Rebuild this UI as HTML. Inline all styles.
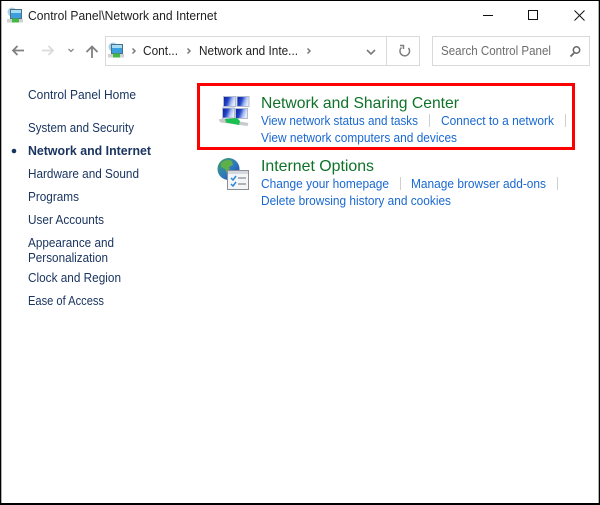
<!DOCTYPE html>
<html><head><meta charset="utf-8"><style>
html,body{margin:0;padding:0;background:#fff;width:600px;height:505px;overflow:hidden}
svg{display:block}
text{font-family:"Liberation Sans",sans-serif;font-size:12.5px;fill:#1a3a5e}
.t{fill:#222}
.n{fill:#1a3560}
.l{fill:#1a68d0}
.h{fill:#0f7228;font-size:16px}
</style></head><body>
<svg width="600" height="505" viewBox="0 0 600 505" xmlns="http://www.w3.org/2000/svg">
<defs>
<linearGradient id="mg" x1="0" y1="0" x2="1" y2="0.3">
<stop offset="0" stop-color="#0a1a9c"/><stop offset="0.45" stop-color="#2446c8"/><stop offset="0.75" stop-color="#a8bcf0"/><stop offset="1" stop-color="#e4ecfc"/>
</linearGradient>
<linearGradient id="gl" x1="0" y1="0" x2="1" y2="1">
<stop offset="0" stop-color="#3fa35a"/><stop offset="0.55" stop-color="#2f78c4"/><stop offset="1" stop-color="#1d3f8c"/>
</linearGradient>
<g id="pc">
<circle cx="5" cy="5" r="4.500" fill="#a8cfe4"/>
<rect x="3.500" y="2.500" width="11" height="9" fill="#3a9fdc" stroke="#4a6f88"/>
<rect x="4" y="3" width="10" height="3" fill="#a4dcf4"/>
<rect x="0" y="12" width="16" height="3.500" fill="#cfd2d2"/>
<rect x="5" y="11.500" width="7" height="4" fill="#44b844"/>
</g>
<g id="mon">
<rect x="0.500" y="0.500" width="12" height="10" fill="url(#mg)" stroke="#b4bcd0"/>
</g>
</defs>
<rect x="0" y="0" width="600" height="505" fill="#fff"/>
<rect x="0" y="0" width="600" height="1" fill="#000"/>
<rect x="0" y="0" width="1.300" height="505" fill="#000"/>
<rect x="598.700" y="0" width="1.300" height="505" fill="#000"/>
<rect x="0" y="503" width="600" height="2" fill="#000"/>

<use href="#pc" x="7" y="7"/>
<text class="t" x="28" y="20" textLength="189" lengthAdjust="spacingAndGlyphs">Control Panel\Network and Internet</text>

<rect x="483" y="15" width="10" height="1" fill="#111"/>
<rect x="528.500" y="10.500" width="9" height="9" fill="none" stroke="#111"/>
<path d="M574.500 10.500l10 10M584.500 10.500l-10 10" stroke="#111" stroke-width="1" fill="none"/>

<path d="M24 50.500H13M17.500 46l-4.500 4.500 4.500 4.500" fill="none" stroke="#808080" stroke-width="1.800"/>
<path d="M42 50.500h11M48.500 46l4.500 4.500-4.500 4.500" fill="none" stroke="#dadada" stroke-width="1.800"/>
<path d="M68.500 49l2.500 2.500 2.500-2.500" fill="none" stroke="#8a8a8a" stroke-width="1.300"/>
<path d="M92 58V47M86.500 52l5.500-5.500 5.500 5.500" fill="none" stroke="#808080" stroke-width="1.800"/>

<rect x="105.500" y="36.500" width="314" height="29" fill="#fff" stroke="#d9d9d9"/>
<rect x="386" y="37" width="1" height="28" fill="#d9d9d9"/>
<use href="#pc" x="108" y="42"/>
<path d="M132.500 48.500l2.500 2.500-2.500 2.500M187.500 48.500l2.500 2.500-2.500 2.500M307.500 48.500l2.500 2.500-2.500 2.500" fill="none" stroke="#7a7a7a" stroke-width="1.500"/>
<text class="t" x="143" y="55" textLength="35" lengthAdjust="spacingAndGlyphs">Cont...</text>
<text class="t" x="199" y="55" textLength="99" lengthAdjust="spacingAndGlyphs">Network and Inte...</text>
<path d="M367 50l4 4 4-4" fill="none" stroke="#7a7a7a" stroke-width="1.600"/>
<path d="M408.500 48a4.800 4.800 0 1 1-7-0.500M400 45.500h3.500v3.500" fill="none" stroke="#7f7f7f" stroke-width="1.500"/>

<rect x="432.500" y="36.500" width="157" height="29" fill="#fff" stroke="#d9d9d9"/>
<text x="441" y="55" textLength="110" lengthAdjust="spacingAndGlyphs" style="fill:#6d6d6d">Search Control Panel</text>
<circle cx="576.500" cy="50" r="3.200" fill="none" stroke="#666" stroke-width="1.500"/>
<path d="M574 53l-3.500 3.500" stroke="#666" stroke-width="1.800"/>

<text class="n" x="28" y="99" textLength="108" lengthAdjust="spacingAndGlyphs">Control Panel Home</text>
<text class="n" x="28" y="132" textLength="106" lengthAdjust="spacingAndGlyphs">System and Security</text>
<circle cx="14" cy="151" r="2.300" fill="#1a3560"/>
<text class="n" x="28" y="155" textLength="123" lengthAdjust="spacingAndGlyphs" font-weight="700">Network and Internet</text>
<text class="n" x="28" y="178" textLength="111" lengthAdjust="spacingAndGlyphs">Hardware and Sound</text>
<text class="n" x="28" y="201" textLength="51" lengthAdjust="spacingAndGlyphs">Programs</text>
<text class="n" x="28" y="224" textLength="76" lengthAdjust="spacingAndGlyphs">User Accounts</text>
<text class="n" x="28" y="247" textLength="86" lengthAdjust="spacingAndGlyphs">Appearance and</text>
<text class="n" x="28" y="262" textLength="80" lengthAdjust="spacingAndGlyphs">Personalization</text>
<text class="n" x="28" y="282" textLength="93" lengthAdjust="spacingAndGlyphs">Clock and Region</text>
<text class="n" x="28" y="305" textLength="76" lengthAdjust="spacingAndGlyphs">Ease of Access</text>

<rect x="198.500" y="84.500" width="375" height="64" fill="none" stroke="#f00" stroke-width="3"/>

<use href="#mon" x="223" y="96"/>
<use href="#mon" x="236.500" y="96"/>
<use href="#mon" x="222" y="107.500"/>
<use href="#mon" x="235" y="108"/>
<path d="M218.500 119.500l4-1 26 4.500-1 3-27-3.500z" fill="#c6cacc"/>
<path d="M225 119l12-1 3 3-1 4-13-2.500z" fill="#1cc050"/>

<circle cx="228.500" cy="169" r="11" fill="url(#gl)"/>
<path d="M221 163c3-3 8-4 11-2l1 4-4 2 1 4-3 3-2-5-4-2z" fill="#5fb04a"/>
<rect x="227.500" y="170.500" width="21" height="19" fill="#f4f5f7" stroke="#8a8f96"/>
<rect x="228" y="171" width="20" height="3" fill="#d4d8de"/>
<path d="M231 178l2 2 3-4M231 184l2 2 3-4" fill="none" stroke="#2a86d8" stroke-width="1.500"/>
<path d="M238 178h8M238 184h8" stroke="#6a7078"/>

<text class="h" x="261" y="108" textLength="198" lengthAdjust="spacingAndGlyphs">Network and Sharing Center</text>
<text class="l" x="261" y="125" textLength="157" lengthAdjust="spacingAndGlyphs">View network status and tasks</text>
<rect x="429" y="114" width="1" height="13" fill="#cfcfcf"/>
<text class="l" x="441" y="125" textLength="113" lengthAdjust="spacingAndGlyphs">Connect to a network</text>
<rect x="565" y="114" width="1" height="13" fill="#cfcfcf"/>
<text class="l" x="261" y="142" textLength="196" lengthAdjust="spacingAndGlyphs">View network computers and devices</text>

<text class="h" x="261" y="171" textLength="113" lengthAdjust="spacingAndGlyphs">Internet Options</text>
<text class="l" x="261" y="188" textLength="128" lengthAdjust="spacingAndGlyphs">Change your homepage</text>
<rect x="400" y="177" width="1" height="13" fill="#cfcfcf"/>
<text class="l" x="411" y="188" textLength="135" lengthAdjust="spacingAndGlyphs">Manage browser add-ons</text>
<rect x="557" y="177" width="1" height="13" fill="#cfcfcf"/>
<text class="l" x="261" y="205" textLength="190" lengthAdjust="spacingAndGlyphs">Delete browsing history and cookies</text>
</svg>
</body></html>
